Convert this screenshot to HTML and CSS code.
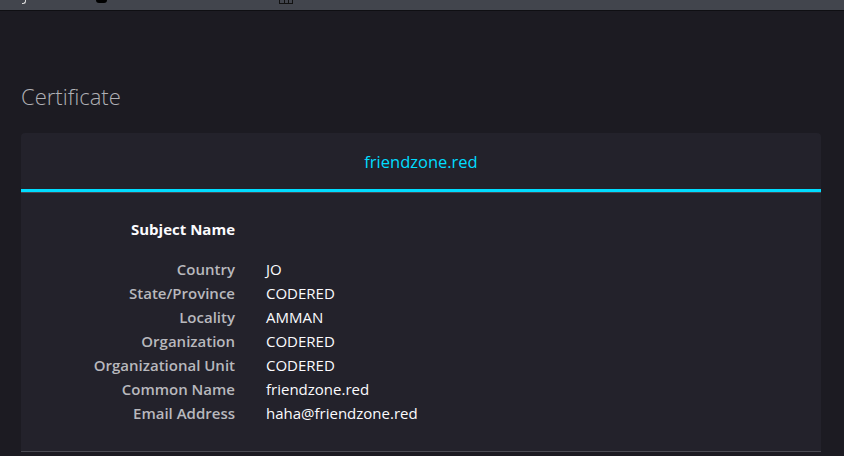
FILE: index.html
```html
<!DOCTYPE html>
<html>
<head>
<meta charset="utf-8">
<link rel="stylesheet" href="styles.css">
</head>
<body>
<div class="toolbar">
  <span class="tb-glyph g1"></span>
  <span class="tb-glyph g2"></span>
  <span class="tb-glyph g3"></span>
</div>
<main class="page">
  <h1 class="title">Certificate</h1>
  <section class="card">
    <div class="tabs">
      <div class="tab">friendzone.red</div>
    </div>
    <div class="panel">
      <div class="info">
        <div class="section-title">Subject Name</div>
        <div class="section-fill"></div>
        <div class="label">Country</div><div class="value">JO</div>
        <div class="label">State/Province</div><div class="value">CODERED</div>
        <div class="label">Locality</div><div class="value">AMMAN</div>
        <div class="label">Organization</div><div class="value">CODERED</div>
        <div class="label">Organizational Unit</div><div class="value">CODERED</div>
        <div class="label">Common Name</div><div class="value">friendzone.red</div>
        <div class="label">Email Address</div><div class="value">haha@friendzone.red</div>
      </div>
    </div>
  </section>
</main>
</body>
</html>
```
FILE: styles.css
```css
html, body {
  margin: 0;
  padding: 0;
  background: #1c1b22;
  font-family: "Open Sans", "Noto Sans", sans-serif;
  overflow: hidden;
}
.toolbar {
  height: 10px;
  background: #42454d;
  border-bottom: 1px solid #0f0f13;
  position: relative;
}
.tb-glyph {
  position: absolute;
  top: 0;
  display: block;
}
.g1 {
  left: 22px;
  width: 3px;
  height: 3px;
  border-right: 1px solid #dcdcdc;
  border-bottom: 1px solid #dcdcdc;
  border-bottom-right-radius: 3px;
}
.g2 {
  left: 96px;
  width: 11px;
  height: 3px;
  background: #000;
  border-radius: 0 0 6px 6px;
}
.g3 {
  left: 279px;
  width: 14px;
  height: 4px;
  border: 1px solid #111;
  border-top: none;
  box-sizing: border-box;
  background: linear-gradient(90deg, transparent 4px, #111 4px, #111 5px, transparent 5px, transparent 8px, #111 8px, #111 9px, transparent 9px);
}
.page {
  padding: 0 23px 0 21px;
}
.title {
  margin: 0;
  padding-top: 60px;
  height: 62px;
  font-size: 22px;
  font-weight: 300;
  color: #b0b0b5;
  line-height: 50px;
  box-sizing: content-box;
}
.card {
  background: #23222b;
  border-radius: 4px 4px 0 0;
}
.tabs {
  display: flex;
  justify-content: center;
  border-bottom: 1px solid #4a4a52;
}
.tab {
  flex: 1;
  text-align: center;
  height: 56px;
  line-height: 58px;
  font-size: 16.5px;
  color: #00ddff;
  border-bottom: 3px solid #00ddff;
}
.panel {
  padding: 26px 0 28px;
  border-bottom: 1px solid #4a4a52;
}
.info {
  display: grid;
  grid-template-columns: 214px 1fr;
  column-gap: 31px;
  row-gap: 4px;
  font-size: 15px;
  line-height: 20px;
}
.section-title {
  text-align: right;
  font-weight: 700;
  color: #fbfbfe;
  margin-bottom: 16px;
}
.label {
  text-align: right;
  font-weight: 600;
  color: #b8b8bd;
}
.value {
  color: #fbfbfe;
}
```
